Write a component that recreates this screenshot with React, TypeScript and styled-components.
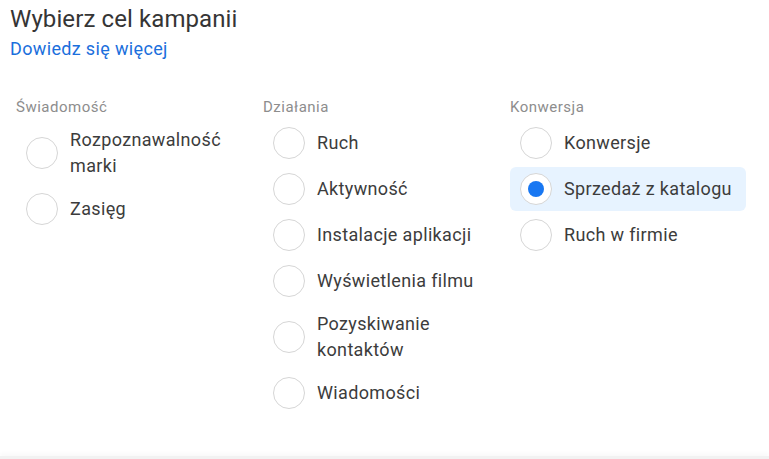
import React, { useState } from 'react';
import styled, { createGlobalStyle } from 'styled-components';

const GlobalStyle = createGlobalStyle`
  html, body {
    margin: 0;
    padding: 0;
    background: #ffffff;
  }
  body {
    font-family: Roboto, "Noto Sans", Arial, sans-serif;
    color: #333333;
  }
`;

const Panel = styled.div`
  width: 769px;
  height: 459px;
  display: flex;
  flex-direction: column;
  overflow: hidden;
  background: #ffffff;
`;

const Body = styled.div`
  flex: 1;
  padding: 6px 10px 0;
`;

const Title = styled.h2`
  margin: 0;
  font-size: 24px;
  line-height: 26px;
  letter-spacing: 0.1px;
  font-weight: 400;
  color: #353535;
`;

const LearnMore = styled.a`
  display: block;
  width: fit-content;
  margin-top: 6px;
  font-size: 18px;
  line-height: 22px;
  letter-spacing: 0.35px;
  color: #1b6fdc;
  text-decoration: none;
  cursor: pointer;
`;

const Columns = styled.div`
  display: grid;
  grid-template-columns: repeat(3, 247px);
  margin-top: 37px;
  padding-left: 6px;
`;

const Column = styled.div`
  display: flex;
  flex-direction: column;
`;

const ColumnTitle = styled.div`
  font-size: 15px;
  line-height: 20px;
  letter-spacing: 0.5px;
  color: #8d8d8d;
  margin-bottom: 4px;
`;

const OptionList = styled.div`
  display: flex;
  flex-direction: column;
  gap: 2px;
  width: 236px;
`;

const Option = styled.label<{ selected: boolean }>`
  display: flex;
  align-items: center;
  gap: 12px;
  min-height: 44px;
  box-sizing: border-box;
  padding: 6px 10px;
  border-radius: 6px;
  background: ${(props) => (props.selected ? '#e7f3ff' : 'transparent')};
  cursor: pointer;
`;

const Radio = styled.span<{ selected: boolean }>`
  flex: 0 0 auto;
  width: 32px;
  height: 32px;
  box-sizing: border-box;
  border-radius: 50%;
  border: 1px solid #d6d6d6;
  background: #ffffff;
  display: flex;
  align-items: center;
  justify-content: center;

  &::after {
    content: '';
    display: ${(props) => (props.selected ? 'block' : 'none')};
    width: 16px;
    height: 16px;
    border-radius: 50%;
    background: #1877f2;
  }
`;

const OptionLabel = styled.span`
  font-size: 18px;
  line-height: 26px;
  letter-spacing: 0.35px;
  color: #3c3c3c;
`;

const Footer = styled.div`
  height: 3px;
  background: #f2f2f2;
  box-shadow: 0 -2px 4px rgba(0, 0, 0, 0.04);
`;

type Group = {
  title: string;
  options: string[];
};

const groups: Group[] = [
  { title: 'Świadomość', options: ['Rozpoznawalność marki', 'Zasięg'] },
  {
    title: 'Działania',
    options: [
      'Ruch',
      'Aktywność',
      'Instalacje aplikacji',
      'Wyświetlenia filmu',
      'Pozyskiwanie kontaktów',
      'Wiadomości',
    ],
  },
  { title: 'Konwersja', options: ['Konwersje', 'Sprzedaż z katalogu', 'Ruch w firmie'] },
];

export default function App() {
  const [objective, setObjective] = useState('Sprzedaż z katalogu');

  return (
    <>
      <GlobalStyle />
      <Panel>
        <Body>
          <Title>Wybierz cel kampanii</Title>
          <LearnMore>Dowiedz się więcej</LearnMore>
          <Columns>
            {groups.map((group) => (
              <Column key={group.title}>
                <ColumnTitle>{group.title}</ColumnTitle>
                <OptionList>
                  {group.options.map((option) => (
                    <Option
                      key={option}
                      selected={objective === option}
                      onClick={() => setObjective(option)}
                    >
                      <Radio selected={objective === option} />
                      <OptionLabel>{option}</OptionLabel>
                    </Option>
                  ))}
                </OptionList>
              </Column>
            ))}
          </Columns>
        </Body>
        <Footer />
      </Panel>
    </>
  );
}
